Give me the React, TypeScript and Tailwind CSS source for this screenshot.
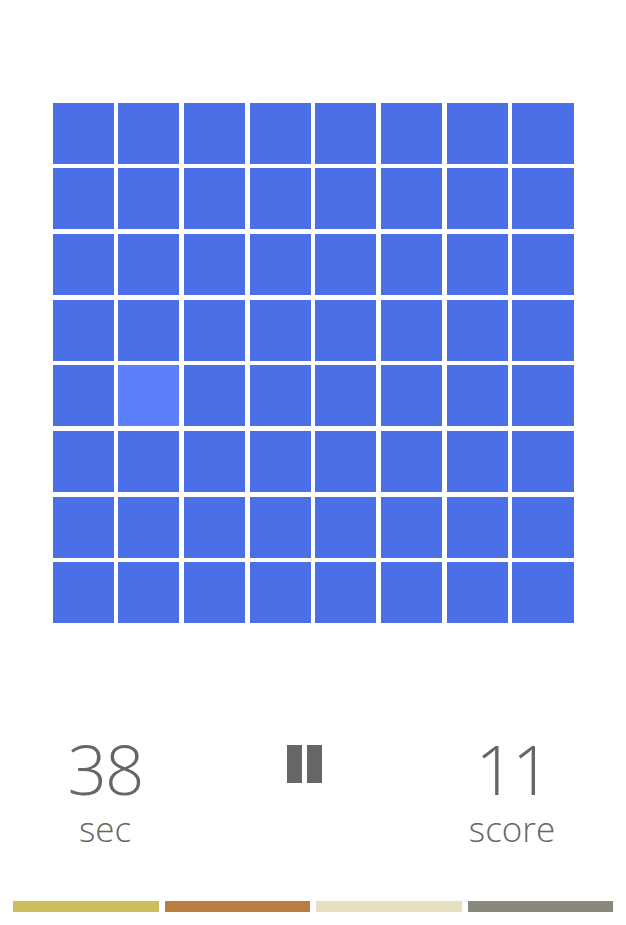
import React from "react";

const cells = Array.from({ length: 64 }, (_, i) => i);

export default function App() {
  return (
    <div
      className="w-[626px] h-[925px] bg-white flex flex-col overflow-hidden"
      style={{ fontFamily: '"Open Sans", "Noto Sans", sans-serif' }}
    >
      <div className="pt-[102.5px] flex justify-center">
        <div className="w-[521px] grid grid-cols-8 gap-[4.7px]">
          {cells.map((i) => (
            <div
              key={i}
              className={
                i === 33
                  ? "h-[61px] bg-[#5c80fc]"
                  : "h-[61px] bg-[#4a6fe7]"
              }
            />
          ))}
        </div>
      </div>

      <div className="mt-[111px] grid grid-cols-[210px_188px_228px] text-[#666666] font-light">
        <div className="flex flex-col items-center">
          <div className="text-[69px] leading-[68px] tracking-[-2px]">38</div>
          <div className="text-[35px] leading-[40px] mt-[7px]">sec</div>
        </div>
        <div className="flex justify-center pt-[11px]">
          <div className="flex gap-[5.5px]">
            <div className="w-[15px] h-[38px] bg-[#666666]" />
            <div className="w-[14.5px] h-[38px] bg-[#666666]" />
          </div>
        </div>
        <div className="flex flex-col items-center">
          <div className="text-[69px] leading-[68px] tracking-[-3px]">11</div>
          <div className="text-[35px] leading-[40px] mt-[7px]">score</div>
        </div>
      </div>

      <div className="mt-auto mb-[13px] px-[13px] flex gap-[6px]">
        <div className="flex-1 h-[11.5px] bg-[#cdbd60]" />
        <div className="flex-1 h-[11.5px] bg-[#bb7c3f]" />
        <div className="flex-1 h-[11.5px] bg-[#e6dfc0]" />
        <div className="flex-1 h-[11.5px] bg-[#8a877b]" />
      </div>
    </div>
  );
}
